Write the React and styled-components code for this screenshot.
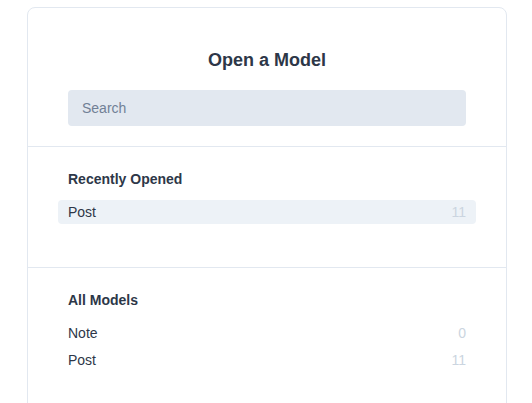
import React from "react";
import styled, { createGlobalStyle } from "styled-components";

const GlobalStyle = createGlobalStyle`
  html, body {
    margin: 0;
    padding: 0;
    background: #ffffff;
    overflow: hidden;
  }
  body {
    font-family: "Liberation Sans", Arial, Helvetica, sans-serif;
    color: #2d3748;
  }
  * { box-sizing: border-box; }
`;

const Page = styled.div`
  padding: 7px 25px 0 27px;
`;

const Card = styled.div`
  width: 480px;
  border: 1px solid #e2e8f0;
  border-radius: 8px;
  background: #ffffff;
`;

const Header = styled.div`
  padding: 40px 40px 20px;
  display: flex;
  flex-direction: column;
  align-items: stretch;
  gap: 18px;
`;

const Title = styled.h1`
  margin: 0;
  font-size: 18px;
  line-height: 24px;
  font-weight: 700;
  text-align: center;
  color: #2d3748;
`;

const SearchInput = styled.input`
  display: block;
  width: 100%;
  height: 36px;
  border: none;
  outline: none;
  border-radius: 4px;
  background: #e2e8f0;
  padding: 0 14px;
  font-family: inherit;
  font-size: 14px;
  color: #2d3748;
  &::placeholder {
    color: #718096;
  }
`;

const Section = styled.section`
  border-top: 1px solid #e2e8f0;
  padding: 22px 40px 43px;
`;

const SectionTitle = styled.h2`
  margin: 0 0 11px;
  font-size: 14px;
  line-height: 20px;
  font-weight: 700;
  color: #2d3748;
`;

const List = styled.ul`
  list-style: none;
  margin: 0 -10px;
  padding: 0;
  display: flex;
  flex-direction: column;
  gap: 3px;
`;

const Row = styled.li`
  display: flex;
  justify-content: space-between;
  align-items: center;
  height: 24px;
  padding: 0 10px;
  border-radius: 4px;
  font-size: 14px;
  line-height: 24px;
  color: #2d3748;
  background: ${(p) => (p.$active ? "#edf2f7" : "transparent")};
  cursor: pointer;
`;

const Count = styled.span`
  font-size: 14px;
  color: #cbd5e0;
`;

const recent = [{ name: "Post", count: 11 }];
const all = [
  { name: "Note", count: 0 },
  { name: "Post", count: 11 },
];

export default function App() {
  return (
    <>
      <GlobalStyle />
      <Page>
        <Card>
          <Header>
            <Title>Open a Model</Title>
            <SearchInput placeholder="Search" />
          </Header>
          <Section>
            <SectionTitle>Recently Opened</SectionTitle>
            <List>
              {recent.map((m, i) => (
                <Row key={m.name} $active={i === 0}>
                  <span>{m.name}</span>
                  <Count>{m.count}</Count>
                </Row>
              ))}
            </List>
          </Section>
          <Section>
            <SectionTitle>All Models</SectionTitle>
            <List>
              {all.map((m) => (
                <Row key={m.name}>
                  <span>{m.name}</span>
                  <Count>{m.count}</Count>
                </Row>
              ))}
            </List>
          </Section>
        </Card>
      </Page>
    </>
  );
}
